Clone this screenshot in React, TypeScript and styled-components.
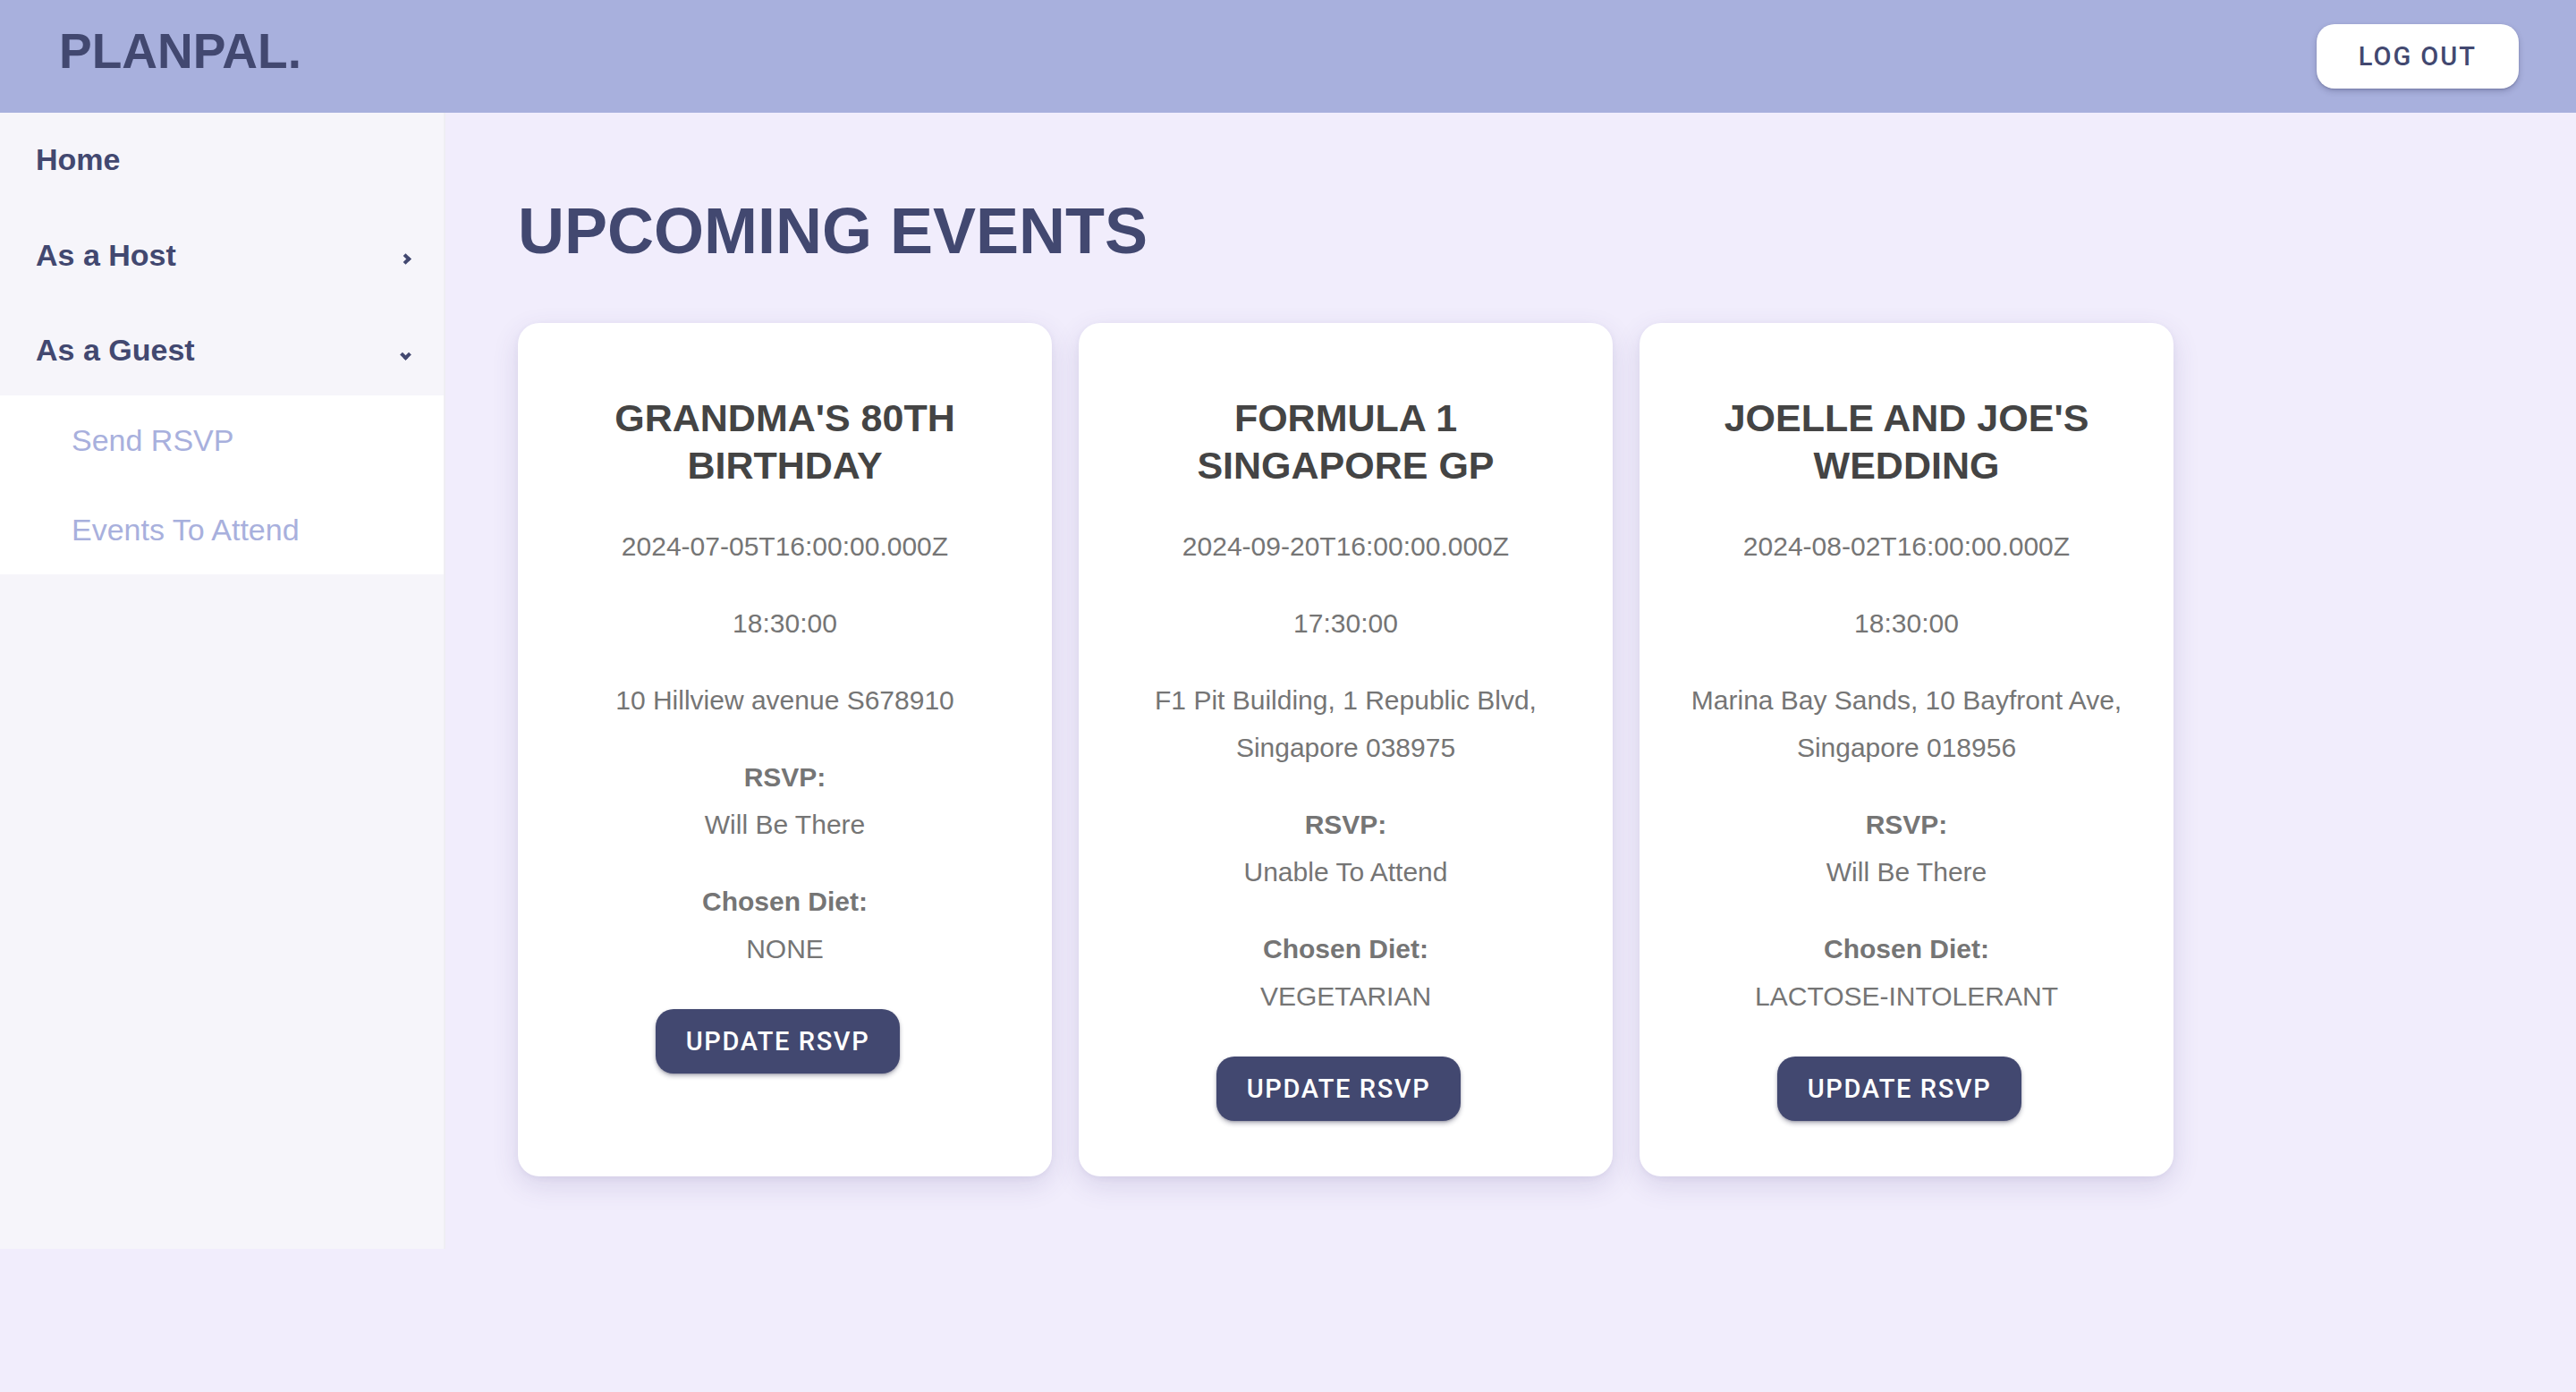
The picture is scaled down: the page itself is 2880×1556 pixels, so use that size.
import React from "react";
import styled, { createGlobalStyle } from "styled-components";

const GlobalStyle = createGlobalStyle`
  html, body {
    margin: 0;
    padding: 0;
    background: #f1edfc;
    font-family: "Liberation Sans", Arial, sans-serif;
  }
  * { box-sizing: border-box; }
`;

const Page = styled.div`
  min-height: 1556px;
  background: #f1edfc;
  display: flex;
  flex-direction: column;
`;

const TopBar = styled.header`
  height: 126px;
  background: #a8b0dd;
  display: flex;
  align-items: center;
  justify-content: space-between;
  padding: 0 64px 0 66px;
`;

const Logo = styled.div`
  font-family: "Liberation Sans", Arial, sans-serif;
  font-weight: 700;
  font-size: 55px;
  line-height: 1;
  color: #424870;
  margin-top: -12px;
`;

const LogoutButton = styled.button`
  height: 72px;
  padding: 0 47px;
  border: none;
  border-radius: 20px;
  background: #ffffff;
  color: #424870;
  font-family: Roboto, "Liberation Sans", sans-serif;
  font-weight: 500;
  font-size: 29px;
  letter-spacing: 2px;
  box-shadow: 0 3px 6px rgba(40, 40, 80, 0.25), 0 1px 2px rgba(40, 40, 80, 0.2);
  cursor: pointer;
`;

const Body = styled.div`
  display: flex;
  align-items: flex-start;
`;

const Sidebar = styled.nav`
  width: 498px;
  height: 1270px;
  flex: 0 0 498px;
  background: #f6f5fa;
  border-right: 2px solid #efeef3;
  display: flex;
  flex-direction: column;
`;

const MenuRow = styled.div<{ $h: number }>`
  height: ${(p) => p.$h}px;
  display: flex;
  align-items: center;
  justify-content: space-between;
  padding: 0 38px 0 40px;
  font-weight: 700;
  font-size: 34px;
  color: #424870;
`;

const Chevron = styled.span<{ $open?: boolean }>`
  width: 9px;
  height: 9px;
  border-right: 4px solid #424870;
  border-bottom: 4px solid #424870;
  transform: rotate(${(p) => (p.$open ? "45deg" : "-45deg")});
  margin-top: ${(p) => (p.$open ? "10px" : "8px")};
`;

const SubMenu = styled.div`
  background: #ffffff;
  display: flex;
  flex-direction: column;
`;

const SubItem = styled.div`
  height: 100px;
  display: flex;
  align-items: center;
  padding-left: 80px;
  font-size: 34px;
  color: #a8b0dd;
`;

const Main = styled.main`
  flex: 1;
  padding: 89px 0 0 81px;
`;

const Title = styled.h1`
  margin: 0;
  font-family: "Liberation Sans", Arial, sans-serif;
  font-weight: 700;
  font-size: 72px;
  line-height: 86px;
  color: #424870;
`;

const CardRow = styled.div`
  margin-top: 60px;
  display: flex;
  gap: 30px;
  align-items: stretch;
`;

const Card = styled.section`
  flex: 0 0 597px;
  width: 597px;
  background: #ffffff;
  border-radius: 24px;
  box-shadow: 0 10px 30px rgba(70, 60, 130, 0.14), 0 2px 6px rgba(70, 60, 130, 0.06);
  padding: 80px 44px 62px;
  display: flex;
  flex-direction: column;
  align-items: center;
  text-align: center;
`;

const CardTitle = styled.h2`
  margin: 0 0 4px;
  font-weight: 700;
  font-size: 43px;
  line-height: 53px;
  color: #444444;
  text-transform: uppercase;
`;

const Info = styled.div`
  margin-top: 33px;
  font-size: 30px;
  line-height: 53px;
  color: #757575;
`;

const Label = styled.div`
  font-weight: 700;
`;

const UpdateButton = styled.button`
  margin-top: 41px;
  margin-right: 16px;
  height: 72px;
  padding: 0 34px;
  border: none;
  border-radius: 20px;
  background: #424870;
  color: #ffffff;
  font-family: Roboto, "Liberation Sans", sans-serif;
  font-weight: 500;
  font-size: 29px;
  letter-spacing: 1.6px;
  box-shadow: 0 3px 5px rgba(30, 30, 60, 0.3), 0 1px 2px rgba(30, 30, 60, 0.2);
  cursor: pointer;
`;

type EventItem = {
  title: string;
  date: string;
  time: string;
  address: string;
  rsvp: string;
  diet: string;
};

const events: EventItem[] = [
  {
    title: "Grandma's 80th Birthday",
    date: "2024-07-05T16:00:00.000Z",
    time: "18:30:00",
    address: "10 Hillview avenue S678910",
    rsvp: "Will Be There",
    diet: "NONE",
  },
  {
    title: "Formula 1 Singapore GP",
    date: "2024-09-20T16:00:00.000Z",
    time: "17:30:00",
    address: "F1 Pit Building, 1 Republic Blvd, Singapore 038975",
    rsvp: "Unable To Attend",
    diet: "VEGETARIAN",
  },
  {
    title: "Joelle and Joe's Wedding",
    date: "2024-08-02T16:00:00.000Z",
    time: "18:30:00",
    address: "Marina Bay Sands, 10 Bayfront Ave, Singapore 018956",
    rsvp: "Will Be There",
    diet: "LACTOSE-INTOLERANT",
  },
];

export default function App() {
  return (
    <Page>
      <GlobalStyle />
      <TopBar>
        <Logo>PLANPAL.</Logo>
        <LogoutButton>LOG OUT</LogoutButton>
      </TopBar>
      <Body>
        <Sidebar>
          <MenuRow $h={104}>Home</MenuRow>
          <MenuRow $h={110}>
            As a Host
            <Chevron />
          </MenuRow>
          <MenuRow $h={102}>
            As a Guest
            <Chevron $open />
          </MenuRow>
          <SubMenu>
            <SubItem>Send RSVP</SubItem>
            <SubItem>Events To Attend</SubItem>
          </SubMenu>
        </Sidebar>
        <Main>
          <Title>UPCOMING EVENTS</Title>
          <CardRow>
            {events.map((e) => (
              <Card key={e.title}>
                <CardTitle>{e.title}</CardTitle>
                <Info>{e.date}</Info>
                <Info>{e.time}</Info>
                <Info>{e.address}</Info>
                <Info>
                  <Label>RSVP:</Label>
                  {e.rsvp}
                </Info>
                <Info>
                  <Label>Chosen Diet:</Label>
                  {e.diet}
                </Info>
                <UpdateButton>UPDATE RSVP</UpdateButton>
              </Card>
            ))}
          </CardRow>
        </Main>
      </Body>
    </Page>
  );
}
